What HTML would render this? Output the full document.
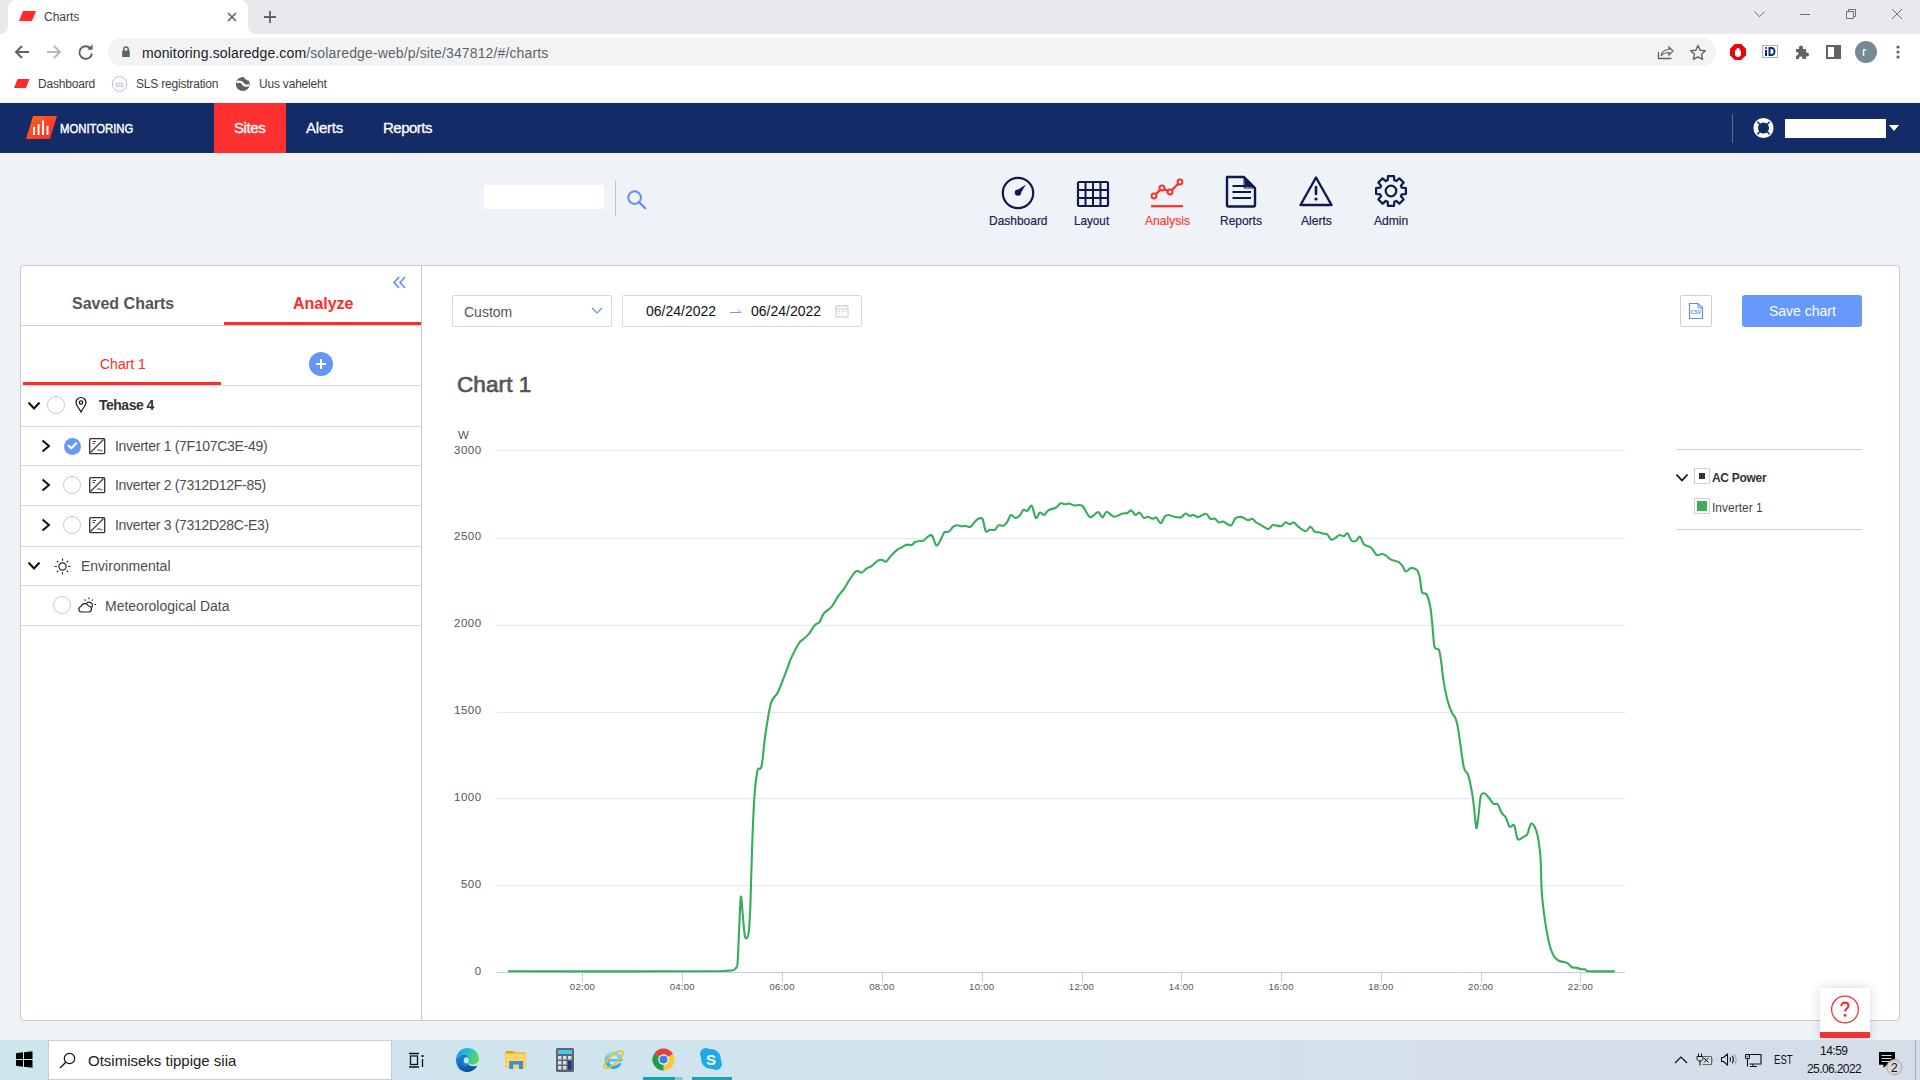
<!DOCTYPE html>
<html><head><meta charset="utf-8">
<style>
*{margin:0;padding:0;box-sizing:border-box}
html,body{width:1920px;height:1080px;overflow:hidden;background:#eff2f7;font-family:"Liberation Sans",sans-serif;position:relative}
.a{position:absolute}
.t{position:absolute;white-space:nowrap;line-height:1}
svg{position:absolute;overflow:visible}
</style></head><body>

<!-- ===== Chrome tab strip ===== -->
<div class="a" style="left:0;top:0;width:1920px;height:34px;background:#e8e9ec"></div>
<div class="a" style="left:0;top:24px;width:260px;height:10px;background:#fff"></div>
<div class="a" style="left:0;top:0;width:8px;height:34px;background:#e8e9ec;border-bottom-right-radius:8px"></div>
<div class="a" style="left:248px;top:0;width:1672px;height:34px;background:#e8e9ec;border-bottom-left-radius:8px"></div>
<div class="a" style="left:8px;top:0;width:240px;height:34px;background:#fff;border-radius:8px 8px 0 0"></div>
<!-- tab favicon -->
<svg style="left:19px;top:11px" width="18" height="12"><path d="M4 0H17L13 10H0Z" fill="#ff2a2a"/></svg>
<div class="t" style="left:44px;top:11px;font-size:12px;color:#3c4043">Charts</div>
<svg style="left:226px;top:11px" width="12" height="12"><path d="M2 2L10 10M10 2L2 10" stroke="#5f6368" stroke-width="1.6"/></svg>
<svg style="left:263px;top:10px" width="14" height="14"><path d="M7 1V13M1 7H13" stroke="#5f6368" stroke-width="1.8"/></svg>
<!-- window controls -->
<svg style="left:1754px;top:11px" width="11" height="7"><path d="M0.5 0.5L5.5 5.8L10.5 0.5" stroke="#707070" fill="none" stroke-width="1"/></svg>
<svg style="left:1800px;top:14px" width="10" height="1"><path d="M0 0.5H10" stroke="#707070" stroke-width="1"/></svg>
<svg style="left:1846px;top:9px" width="11" height="11"><path d="M0.5 2.5H7.5V9.5H0.5Z M2.5 2.5V0.5H9.5V7.5H7.5" stroke="#707070" fill="none" stroke-width="1"/></svg>
<svg style="left:1892px;top:9px" width="10" height="10"><path d="M0 0L10 10M10 0L0 10" stroke="#707070" stroke-width="1"/></svg>

<!-- ===== Address bar row ===== -->
<div class="a" style="left:0;top:34px;width:1920px;height:68px;background:#fff"></div>
<svg style="left:13px;top:43px" width="18" height="18"><path d="M16 9H3M9 3L3 9L9 15" stroke="#5f6368" fill="none" stroke-width="2"/></svg>
<svg style="left:45px;top:43px" width="18" height="18"><path d="M2 9H15M9 3L15 9L9 15" stroke="#b6b8bb" fill="none" stroke-width="2"/></svg>
<svg style="left:77px;top:43px" width="18" height="18"><path d="M15 10.5A6.3 6.3 0 1 1 13.2 5" stroke="#5f6368" fill="none" stroke-width="1.9"/><path d="M10.2 6.7H15.6V1.3Z" fill="#5f6368"/></svg>
<div class="a" style="left:108px;top:38px;width:1608px;height:28px;background:#f1f3f4;border-radius:14px"></div>
<svg style="left:120px;top:45px" width="12" height="14"><path d="M3.8 6V4.3A2.2 2.2 0 0 1 8.2 4.3V6" stroke="#5f6368" fill="none" stroke-width="1.5"/><rect x="2.2" y="5.5" width="7.6" height="6.5" rx="0.6" fill="#5f6368"/></svg>
<div class="t" style="left:142px;top:46px;font-size:14px;letter-spacing:0.13px;color:#202124">monitoring.solaredge.com<span style="color:#5f6368">/solaredge-web/p/site/347812/#/charts</span></div>
<!-- share / star -->
<svg style="left:1657px;top:44px" width="18" height="16"><path d="M1.5 8V14.5H14.5" stroke="#5f6368" fill="none" stroke-width="1.3"/><path d="M4 12C5 7 8 5.5 12 5.5V3L16 7L12 11V8.5C8.5 8.5 6 9.5 4 12Z" stroke="#5f6368" fill="none" stroke-width="1.2"/></svg>
<svg style="left:1689px;top:44px" width="18" height="17"><path d="M9 1.5L11.2 6.3L16.4 6.8L12.5 10.3L13.6 15.4L9 12.8L4.4 15.4L5.5 10.3L1.6 6.8L6.8 6.3Z" stroke="#5f6368" fill="none" stroke-width="1.4" stroke-linejoin="round"/></svg>
<!-- extensions -->
<svg style="left:1730px;top:44px" width="16" height="16"><path d="M4.7 0H11.3L16 4.7V11.3L11.3 16H4.7L0 11.3V4.7Z" fill="#e5090f"/><path d="M5 11V6.5A0.8 0.8 0 0 1 6.5 6.5V4.5A0.8 0.8 0 0 1 8 4.5A0.8 0.8 0 0 1 9.5 5V7A0.8 0.8 0 0 1 11 7.5V10C11 12 9.5 13 8 13C6.5 13 5.5 12 5 11Z" fill="#fff"/></svg>
<svg style="left:1762px;top:45px" width="16" height="13"><rect x="0.5" y="0.5" width="15" height="12" fill="#fff" stroke="#9fb3d9" stroke-width="1"/><rect x="3" y="5" width="2" height="6" fill="#0c2d83"/><rect x="3" y="2" width="2" height="2" fill="#e5202a"/><path d="M6.5 2H9.5C12 2 13.5 3.8 13.5 6.5C13.5 9.2 12 11 9.5 11H6.5Z M8.5 4V9H9.5C10.8 9 11.5 8 11.5 6.5C11.5 5 10.8 4 9.5 4Z" fill="#0c2d83" fill-rule="evenodd"/></svg>
<svg style="left:1794px;top:44px" width="16" height="16"><path d="M2 5H5V3.5A2 2 0 0 1 9 3.5V5H12V8.5H13A2 2 0 0 1 13 12.5H12V15H8.5V14A1.8 1.8 0 0 0 5 14V15H2V11.5H3A1.8 1.8 0 0 0 3 8H2Z" fill="#5f6368"/></svg>
<svg style="left:1826px;top:45px" width="15" height="14"><rect x="1" y="1" width="13" height="12" stroke="#5f6368" fill="none" stroke-width="2"/><rect x="8" y="1" width="6" height="12" fill="#5f6368"/></svg>
<div class="a" style="left:1855px;top:41px;width:22px;height:22px;border-radius:50%;background:#748a97"></div>
<div class="t" style="left:1862px;top:45px;font-size:13px;color:#fff">r</div>
<svg style="left:1896px;top:45px" width="4" height="14"><circle cx="2" cy="2" r="1.6" fill="#5f6368"/><circle cx="2" cy="7" r="1.6" fill="#5f6368"/><circle cx="2" cy="12" r="1.6" fill="#5f6368"/></svg>

<!-- bookmarks -->
<svg style="left:14px;top:79px" width="16" height="10"><path d="M3.5 0H15.5L12 9H0Z" fill="#ff2a2a"/></svg>
<div class="t" style="left:38px;top:78px;font-size:12px;letter-spacing:-0.2px;color:#3c4043">Dashboard</div>
<svg style="left:111px;top:76px" width="17" height="16"><circle cx="8.5" cy="8" r="7.3" fill="#fff" stroke="#c9b3ec" stroke-width="1"/><text x="8.5" y="10.5" font-size="7" text-anchor="middle" fill="#b9a0e8" font-family="Liberation Sans">sls</text></svg>
<div class="t" style="left:136px;top:78px;font-size:12px;letter-spacing:-0.2px;color:#3c4043">SLS registration</div>
<svg style="left:235px;top:76px" width="16" height="16"><circle cx="7.8" cy="8" r="7" fill="#5f6368"/><path d="M1.5 6.2C4 5.2 6.8 5.8 7.8 7.6C8.8 9.4 11 10.2 14.2 9" stroke="#fff" stroke-width="2.3" fill="none"/><path d="M9.5 1.3C10.5 2.8 12.5 3.2 13.8 4.2" stroke="#fff" stroke-width="1.6" fill="none"/></svg>
<div class="t" style="left:259px;top:78px;font-size:12px;letter-spacing:-0.2px;color:#3c4043">Uus vaheleht</div>

<!-- ===== SolarEdge nav ===== -->
<div class="a" style="left:0;top:103px;width:1920px;height:50px;background:#132b66"></div>
<svg style="left:26px;top:116px" width="32" height="23"><defs><linearGradient id="lg" x1="0" y1="0" x2="1" y2="1"><stop offset="0" stop-color="#ff6a1a"/><stop offset="1" stop-color="#ff2430"/></linearGradient></defs><path d="M7 0H31L24 23H0Z" fill="url(#lg)"/><rect x="7" y="11" width="2" height="8" fill="#fff"/><rect x="11.5" y="8" width="2" height="11" fill="#fff"/><rect x="16" y="4.5" width="2" height="14.5" fill="#fff"/><rect x="20.5" y="10" width="2" height="9" fill="#fff"/></svg>
<div class="t" style="left:60px;top:122px;font-size:13px;color:#fff;-webkit-text-stroke:0.45px #fff;transform:scaleX(0.87);transform-origin:0 0">MONITORING</div>
<div class="a" style="left:214px;top:103px;width:72px;height:50px;background:#ff3030"></div>
<div class="t" style="left:234px;top:120px;font-size:15px;letter-spacing:-0.4px;color:#fff;-webkit-text-stroke:0.3px #fff">Sites</div>
<div class="t" style="left:306px;top:120px;font-size:15px;letter-spacing:-0.2px;color:#fff;-webkit-text-stroke:0.3px #fff">Alerts</div>
<div class="t" style="left:383px;top:120px;font-size:15px;letter-spacing:-0.5px;color:#fff;-webkit-text-stroke:0.3px #fff">Reports</div>
<div class="a" style="left:1732px;top:114px;width:1px;height:29px;background:#5a6a96"></div>
<svg style="left:1752px;top:117px" width="22" height="22"><circle cx="11.5" cy="11" r="7.8" stroke="#fff" stroke-width="4.6" fill="none"/><path d="M7.9 7.4L5.3 4.8M15.1 7.4L17.7 4.8M7.9 14.6L5.3 17.2M15.1 14.6L17.7 17.2" stroke="#132b66" stroke-width="1.5"/></svg>
<div class="a" style="left:1785px;top:119px;width:101px;height:19px;background:#fff"></div>
<svg style="left:1889px;top:125px" width="10" height="6"><path d="M0 0H10L5 6Z" fill="#fff"/></svg>

<!-- ===== Sub header ===== -->
<div class="a" style="left:484px;top:185px;width:120px;height:24px;background:#fff"></div>
<div class="a" style="left:615px;top:180px;width:1px;height:36px;background:#c5c8cc"></div>
<svg style="left:626px;top:189px" width="22" height="22"><circle cx="8.6" cy="8.6" r="6.3" stroke="#5b8ff0" stroke-width="2" fill="none"/><path d="M13.2 13.2L19.2 19.2" stroke="#5b8ff0" stroke-width="2.2" stroke-linecap="round"/></svg>

<!-- icons -->
<svg style="left:1000px;top:175px" width="36" height="36"><circle cx="18" cy="18" r="15.2" stroke="#0e1a4f" stroke-width="2.2" fill="none"/><circle cx="18" cy="17.6" r="3.2" fill="#0e1a4f"/><path d="M16 16L26 9.5L19.8 19.5Z" fill="#0e1a4f"/></svg>
<svg style="left:1075px;top:179px" width="36" height="30"><rect x="3" y="3" width="30" height="24" rx="1" stroke="#0e1a4f" stroke-width="2.2" fill="none"/><path d="M10.5 3V27M18 3V27M25.5 3V27M3 11H33M3 19H33" stroke="#0e1a4f" stroke-width="2"/></svg>
<svg style="left:1148px;top:176px" width="38" height="34"><path d="M6 20L14 12L22 16L32 6" stroke="#ff2a2a" stroke-width="2.2" fill="none"/><circle cx="6" cy="20" r="2.4" fill="#fff" stroke="#ff2a2a" stroke-width="2"/><circle cx="14" cy="12" r="2.4" fill="#fff" stroke="#ff2a2a" stroke-width="2"/><circle cx="22" cy="16" r="2.4" fill="#fff" stroke="#ff2a2a" stroke-width="2"/><circle cx="32" cy="6" r="2.4" fill="#fff" stroke="#ff2a2a" stroke-width="2"/><path d="M3 30.2H35" stroke="#ff2a2a" stroke-width="2.2"/></svg>
<svg style="left:1222px;top:172px" width="36" height="38"><path d="M5 5H22L33 16V33A1.5 1.5 0 0 1 31.5 34.5H6.5A1.5 1.5 0 0 1 5 33Z" stroke="#0e1a4f" stroke-width="2.4" fill="none" stroke-linejoin="round"/><path d="M22 5V16H33" stroke="#0e1a4f" stroke-width="1" fill="none"/><path d="M22 5L23 14.5L33 16Z" fill="#0e1a4f"/><path d="M10.5 14H25M10.5 20H29M10.5 26H29" stroke="#0e1a4f" stroke-width="2.2"/></svg>
<svg style="left:1298px;top:175px" width="36" height="34"><path d="M18 2.5L33.5 30H2.5Z" stroke="#0e1a4f" stroke-width="2.4" fill="none" stroke-linejoin="round"/><path d="M18 12V19" stroke="#0e1a4f" stroke-width="2.6" stroke-linecap="round"/><circle cx="18" cy="24" r="1.6" fill="#0e1a4f"/></svg>
<svg style="left:1373px;top:173px" width="36" height="36"><path id="gear" d="M14.69 7.30L14.98 3.10L21.02 3.10L21.31 7.30L23.23 8.09L26.40 5.33L30.67 9.60L27.91 12.77L28.70 14.69L32.90 14.98L32.90 21.02L28.70 21.31L27.91 23.23L30.67 26.40L26.40 30.67L23.23 27.91L21.31 28.70L21.02 32.90L14.98 32.90L14.69 28.70L12.77 27.91L9.60 30.67L5.33 26.40L8.09 23.23L7.30 21.31L3.10 21.02L3.10 14.98L7.30 14.69L8.09 12.77L5.33 9.60L9.60 5.33L12.77 8.09Z" stroke="#0e1a4f" stroke-width="2.2" fill="none" stroke-linejoin="round"/><circle cx="18" cy="18" r="5.3" stroke="#0e1a4f" stroke-width="2.2" fill="none"/></svg>
<div class="t" style="left:989px;top:214px;font-size:13px;color:#1b2350;-webkit-text-stroke:0.2px #1b2350;transform:scaleX(0.92);transform-origin:0 0">Dashboard</div>
<div class="t" style="left:1074px;top:214px;font-size:13px;color:#1b2350;-webkit-text-stroke:0.2px #1b2350;transform:scaleX(0.9);transform-origin:0 0">Layout</div>
<div class="t" style="left:1145px;top:214px;font-size:13px;color:#ff3a3a;-webkit-text-stroke:0.2px #ff3a3a;transform:scaleX(0.93);transform-origin:0 0">Analysis</div>
<div class="t" style="left:1220px;top:214px;font-size:13px;color:#1b2350;-webkit-text-stroke:0.2px #1b2350;transform:scaleX(0.92);transform-origin:0 0">Reports</div>
<div class="t" style="left:1301px;top:214px;font-size:13px;color:#1b2350;-webkit-text-stroke:0.2px #1b2350;transform:scaleX(0.93);transform-origin:0 0">Alerts</div>
<div class="t" style="left:1374px;top:214px;font-size:13px;color:#1b2350;-webkit-text-stroke:0.2px #1b2350;transform:scaleX(0.93);transform-origin:0 0">Admin</div>

<!-- ===== Panels ===== -->
<div class="a" style="left:20px;top:265px;width:1880px;height:756px;background:#fff;border:1px solid #cbcbcb;border-radius:4px"></div>
<div class="a" style="left:421px;top:266px;width:1px;height:754px;background:#cbcbcb"></div>

<!-- LEFT PANEL -->
<div class="t" style="left:72px;top:296px;font-size:16px;font-weight:bold;color:#555">Saved Charts</div>
<div class="t" style="left:293px;top:296px;font-size:16px;font-weight:bold;color:#ff2a2a">Analyze</div>
<svg style="left:392px;top:276px" width="16" height="14"><path d="M7 1L2 6.5L7 12M13 1L8 6.5L13 12" stroke="#5b8ff0" stroke-width="1.6" fill="none"/></svg>
<div class="a" style="left:21px;top:325px;width:400px;height:1px;background:#cfd2d6"></div>
<div class="a" style="left:224px;top:322px;width:197px;height:3px;background:#ff2a2a"></div>

<div class="t" style="left:100px;top:357px;font-size:14px;color:#ff2a2a">Chart 1</div>
<div class="a" style="left:23px;top:382px;width:198px;height:3px;background:#ff2a2a"></div>
<div class="a" style="left:309px;top:352px;width:24px;height:24px;border-radius:50%;background:#6496f6"></div>
<svg style="left:315px;top:358px" width="12" height="12"><path d="M6 1V11M1 6H11" stroke="#fff" stroke-width="2"/></svg>
<div class="a" style="left:21px;top:385px;width:400px;height:1px;background:#d5d7da"></div>

<!-- Tehase 4 row -->
<svg style="left:27px;top:401px" width="14" height="10"><path d="M1.5 1.5L7 7.5L12.5 1.5" stroke="#111" stroke-width="2" fill="none"/></svg>
<div class="a" style="left:47px;top:396px;width:18px;height:18px;border-radius:50%;border:1px solid #c9c9c9"></div>
<svg style="left:75px;top:397px" width="12" height="16"><path d="M6 15C4 11 1 8.5 1 5.5A5 5 0 0 1 11 5.5C11 8.5 8 11 6 15Z" stroke="#111" stroke-width="1.2" fill="none"/><circle cx="6" cy="5.5" r="1.7" stroke="#111" stroke-width="1.2" fill="none"/></svg>
<div class="t" style="left:99px;top:398px;font-size:14px;font-weight:bold;letter-spacing:-0.5px;color:#333">Tehase 4</div>
<div class="a" style="left:21px;top:426px;width:400px;height:1px;background:#d5d7da"></div>

<!-- inverter rows -->
<svg style="left:40px;top:439px" width="12" height="14"><path d="M2.5 1.5L9 7L2.5 12.5" stroke="#111" stroke-width="2" fill="none"/></svg>
<div class="a" style="left:63.5px;top:437.5px;width:17px;height:17px;border-radius:50%;background:#6699f8"></div>
<svg style="left:66px;top:440px" width="13" height="11"><path d="M2 5.3L5.2 8.3L10.8 2.8" stroke="#fff" stroke-width="2.2" fill="none"/></svg>
<svg style="left:89px;top:438px" width="17" height="17"><rect x="0.7" y="0.7" width="15" height="15" rx="1" stroke="#333" stroke-width="1.3" fill="none"/><path d="M1.5 14.5L14.5 1.5" stroke="#333" stroke-width="1.1"/><path d="M3.5 3.5H7M3.5 5.5H6" stroke="#333" stroke-width="0.9"/><path d="M8.8 13C9.2 11.2 10.5 11 11 12.3C11.5 13.5 12.8 13.3 13.2 11.8" stroke="#333" stroke-width="1" fill="none"/></svg>
<div class="t" style="left:115px;top:439px;font-size:14px;letter-spacing:-0.3px;color:#4d4d4d">Inverter 1 (7F107C3E-49)</div>
<div class="a" style="left:21px;top:465px;width:400px;height:1px;background:#d5d7da"></div>

<svg style="left:40px;top:478px" width="12" height="14"><path d="M2.5 1.5L9 7L2.5 12.5" stroke="#111" stroke-width="2" fill="none"/></svg>
<div class="a" style="left:63px;top:476px;width:18px;height:18px;border-radius:50%;border:1px solid #c9c9c9"></div>
<svg style="left:89px;top:477px" width="17" height="17"><rect x="0.7" y="0.7" width="15" height="15" rx="1" stroke="#333" stroke-width="1.3" fill="none"/><path d="M1.5 14.5L14.5 1.5" stroke="#333" stroke-width="1.1"/><path d="M3.5 3.5H7M3.5 5.5H6" stroke="#333" stroke-width="0.9"/><path d="M8.8 13C9.2 11.2 10.5 11 11 12.3C11.5 13.5 12.8 13.3 13.2 11.8" stroke="#333" stroke-width="1" fill="none"/></svg>
<div class="t" style="left:115px;top:478px;font-size:14px;letter-spacing:-0.3px;color:#4d4d4d">Inverter 2 (7312D12F-85)</div>
<div class="a" style="left:21px;top:505px;width:400px;height:1px;background:#d5d7da"></div>

<svg style="left:40px;top:518px" width="12" height="14"><path d="M2.5 1.5L9 7L2.5 12.5" stroke="#111" stroke-width="2" fill="none"/></svg>
<div class="a" style="left:63px;top:516px;width:18px;height:18px;border-radius:50%;border:1px solid #c9c9c9"></div>
<svg style="left:89px;top:517px" width="17" height="17"><rect x="0.7" y="0.7" width="15" height="15" rx="1" stroke="#333" stroke-width="1.3" fill="none"/><path d="M1.5 14.5L14.5 1.5" stroke="#333" stroke-width="1.1"/><path d="M3.5 3.5H7M3.5 5.5H6" stroke="#333" stroke-width="0.9"/><path d="M8.8 13C9.2 11.2 10.5 11 11 12.3C11.5 13.5 12.8 13.3 13.2 11.8" stroke="#333" stroke-width="1" fill="none"/></svg>
<div class="t" style="left:115px;top:518px;font-size:14px;letter-spacing:-0.3px;color:#4d4d4d">Inverter 3 (7312D28C-E3)</div>
<div class="a" style="left:21px;top:546px;width:400px;height:1px;background:#d5d7da"></div>

<!-- environmental -->
<svg style="left:27px;top:561px" width="14" height="10"><path d="M1.5 1.5L7 7.5L12.5 1.5" stroke="#111" stroke-width="2" fill="none"/></svg>
<svg style="left:54px;top:558px" width="17" height="17"><circle cx="8.5" cy="8.5" r="3.6" stroke="#222" stroke-width="1.2" fill="none"/><path d="M8.5 0.5V2.8M8.5 14.2V16.5M0.5 8.5H2.8M14.2 8.5H16.5M2.8 2.8L4.4 4.4M12.6 12.6L14.2 14.2M2.8 14.2L4.4 12.6M12.6 4.4L14.2 2.8" stroke="#222" stroke-width="1.1"/></svg>
<div class="t" style="left:81px;top:559px;font-size:14px;color:#4d4d4d">Environmental</div>
<div class="a" style="left:21px;top:585px;width:400px;height:1px;background:#d5d7da"></div>

<div class="a" style="left:53px;top:596px;width:18px;height:18px;border-radius:50%;border:1px solid #c9c9c9"></div>
<svg style="left:78px;top:597px" width="18" height="16"><path d="M3.5 15H10.5A3 3 0 0 0 10.5 9A4 4 0 0 0 3 9.5A2.8 2.8 0 0 0 3.5 15Z" stroke="#222" stroke-width="1.2" fill="none"/><path d="M8.3 6.5A3.5 3.5 0 0 1 14.5 8.5A3 3 0 0 1 13 11" stroke="#222" stroke-width="1.1" fill="none"/><path d="M11 0.5V2.3M16.5 7.5H18M14.8 2.5L13.8 3.6M6.5 2.5L7.6 3.6" stroke="#222" stroke-width="1.1"/></svg>
<div class="t" style="left:105px;top:599px;font-size:14px;color:#4d4d4d">Meteorological Data</div>
<div class="a" style="left:21px;top:625px;width:400px;height:1px;background:#d5d7da"></div>

<!-- RIGHT PANEL header -->
<div class="a" style="left:452px;top:295px;width:160px;height:32px;border:1px solid #d9d9d9;border-radius:2px"></div>
<div class="t" style="left:464px;top:305px;font-size:14px;color:#555">Custom</div>
<svg style="left:591px;top:307px" width="12" height="8"><path d="M1 1L6 6L11 1" stroke="#6e8cf0" stroke-width="1.2" fill="none"/></svg>
<div class="a" style="left:622px;top:295px;width:240px;height:32px;border:1px solid #d9d9d9;border-radius:2px"></div>
<div class="t" style="left:646px;top:304px;font-size:14px;color:#111">06/24/2022</div>
<svg style="left:730px;top:308px" width="12" height="6"><path d="M0 4.5H11L8 1.5" stroke="#999" stroke-width="1" fill="none"/></svg>
<div class="t" style="left:751px;top:304px;font-size:14px;color:#111">06/24/2022</div>
<svg style="left:835px;top:304px" width="14" height="14"><rect x="1" y="2" width="12" height="11" stroke="#c8c8c8" stroke-width="1" fill="none"/><path d="M1 5H13M4 1V3M10 1V3M3.5 7.5H5M6.5 7.5H8M9.5 7.5H11M3.5 10H5M6.5 10H8" stroke="#c8c8c8" stroke-width="1"/></svg>

<div class="a" style="left:1680px;top:295px;width:32px;height:32px;border:1px solid #d0d0d0;border-radius:2px"></div>
<svg style="left:1688px;top:302px" width="16" height="18"><path d="M1.5 1.5H10L14.5 6V16.5H1.5Z" stroke="#5b8ff0" stroke-width="1.2" fill="none"/><path d="M10 1.5V6H14.5" stroke="#5b8ff0" stroke-width="1" fill="none"/><text x="8" y="12" font-size="5" font-weight="bold" text-anchor="middle" fill="#5b8ff0" font-family="Liberation Sans">CSV</text></svg>
<div class="a" style="left:1742px;top:295px;width:120px;height:32px;background:#6699fb;border-radius:3px"></div>
<div class="t" style="left:1769px;top:304px;font-size:14px;color:#fff">Save chart</div>

<div class="t" style="left:457px;top:374px;font-size:22.5px;letter-spacing:0.1px;color:#555;-webkit-text-stroke:0.7px #555">Chart 1</div>

<!-- CHART -->
<svg id="chart" style="left:0;top:0" width="1920" height="1080"><g><path d="M497 885.5H1625" stroke="#e1eaf5" stroke-width="1"/><path d="M497 798.5H1625" stroke="#e1eaf5" stroke-width="1"/><path d="M497 712.5H1625" stroke="#e1eaf5" stroke-width="1"/><path d="M497 625.5H1625" stroke="#e1eaf5" stroke-width="1"/><path d="M497 538.5H1625" stroke="#e1eaf5" stroke-width="1"/><path d="M497 450.5H1625" stroke="#e1eaf5" stroke-width="1"/><path d="M497 972.5H1625" stroke="#c0cfe2" stroke-width="1"/><path d="M582.5 972V982" stroke="#c0cfe2" stroke-width="1"/><path d="M682.5 972V982" stroke="#c0cfe2" stroke-width="1"/><path d="M782.5 972V982" stroke="#c0cfe2" stroke-width="1"/><path d="M882.5 972V982" stroke="#c0cfe2" stroke-width="1"/><path d="M982.5 972V982" stroke="#c0cfe2" stroke-width="1"/><path d="M1082.5 972V982" stroke="#c0cfe2" stroke-width="1"/><path d="M1181.5 972V982" stroke="#c0cfe2" stroke-width="1"/><path d="M1281.5 972V982" stroke="#c0cfe2" stroke-width="1"/><path d="M1381.5 972V982" stroke="#c0cfe2" stroke-width="1"/><path d="M1481.5 972V982" stroke="#c0cfe2" stroke-width="1"/><path d="M1580.5 972V982" stroke="#c0cfe2" stroke-width="1"/></g><g font-family="Liberation Sans" font-size="11.5" letter-spacing="0.45" fill="#555"><text x="481.5" y="887.7" text-anchor="end">500</text><text x="481.5" y="800.8" text-anchor="end">1000</text><text x="481.5" y="714.0" text-anchor="end">1500</text><text x="481.5" y="627.2" text-anchor="end">2000</text><text x="481.5" y="540.4" text-anchor="end">2500</text><text x="481.5" y="453.5" text-anchor="end">3000</text><text x="481.5" y="974.5" text-anchor="end">0</text><text x="458" y="439">W</text></g><g font-family="Liberation Sans" font-size="9.6" letter-spacing="0.25" fill="#555"><text x="582.5" y="990.2" text-anchor="middle">02:00</text><text x="682.3" y="990.2" text-anchor="middle">04:00</text><text x="782.1" y="990.2" text-anchor="middle">06:00</text><text x="881.9" y="990.2" text-anchor="middle">08:00</text><text x="981.7" y="990.2" text-anchor="middle">10:00</text><text x="1081.5" y="990.2" text-anchor="middle">12:00</text><text x="1181.3" y="990.2" text-anchor="middle">14:00</text><text x="1281.1" y="990.2" text-anchor="middle">16:00</text><text x="1380.9" y="990.2" text-anchor="middle">18:00</text><text x="1480.7" y="990.2" text-anchor="middle">20:00</text><text x="1580.5" y="990.2" text-anchor="middle">22:00</text></g><path d="M508.0 971.3 C543.8 971.2 684.8 971.6 722.9 971.0 C736.4 970.4 733.9 970.2 736.4 967.5 C738.0 964.8 737.3 966.8 738.0 955.0 C738.7 943.2 740.0 903.4 740.8 896.6 C741.6 895.1 742.0 907.2 742.7 914.0 C743.4 920.8 744.2 934.1 745.2 937.5 C746.2 939.0 747.5 939.0 748.4 934.4 C749.2 929.4 749.7 922.5 750.3 907.6 C750.9 892.7 751.5 863.1 752.2 844.7 C752.9 826.3 753.5 809.7 754.4 797.4 C755.3 785.1 756.3 775.9 757.5 770.7 C758.7 765.5 760.3 772.0 761.6 766.0 C762.9 760.0 763.8 745.0 765.4 734.5 C767.0 724.0 768.9 710.1 771.0 703.0 C773.1 695.9 775.3 697.8 778.0 692.0 C780.7 686.2 785.3 673.7 787.4 668.3 C789.5 662.9 788.7 663.6 790.6 659.4 C792.5 655.2 796.8 646.7 798.9 643.3 C801.0 639.9 801.6 640.8 803.3 639.2 C805.0 637.6 806.9 636.3 808.9 633.9 C810.9 631.5 813.2 627.0 815.0 625.0 C816.8 623.0 817.9 624.2 819.4 622.2 C820.9 620.2 821.8 615.9 823.9 613.3 C826.0 610.7 829.4 609.5 831.7 606.7 C834.0 603.9 835.7 599.8 837.8 596.7 C839.9 593.6 842.5 591.1 844.4 588.3 C846.3 585.5 847.4 582.9 849.4 580.0 C851.4 577.1 854.0 572.3 856.1 571.1 C858.2 569.9 860.0 573.0 861.7 572.6 C863.4 572.2 864.4 570.1 866.1 568.9 C867.9 567.7 870.2 567.0 872.2 565.6 C874.2 564.2 876.1 561.5 877.8 560.6 C879.5 559.7 880.8 559.8 882.2 560.0 C883.6 560.2 884.6 562.4 886.1 561.7 C887.6 561.0 889.2 557.7 891.1 555.6 C893.0 553.5 895.9 550.8 897.8 549.4 C899.6 548.0 900.7 548.0 902.2 547.2 C903.7 546.4 905.1 545.1 906.7 544.7 C908.3 544.3 910.3 545.5 911.7 545.0 C913.1 544.5 913.6 542.7 915.0 542.0 C916.4 541.3 918.5 541.3 920.0 541.0 C921.5 540.7 922.4 541.1 923.8 540.4 C925.1 539.7 926.5 537.5 927.9 536.7 C929.3 535.9 930.7 534.2 932.1 535.7 C933.5 537.2 934.9 544.6 936.2 545.4 C937.6 546.2 939.1 542.5 940.4 540.4 C941.7 538.2 942.8 534.0 944.2 532.5 C945.6 531.0 947.2 532.7 948.8 531.7 C950.3 530.7 951.9 527.8 953.3 526.7 C954.7 525.6 955.9 525.3 957.1 525.2 C958.4 525.1 959.3 526.1 960.8 526.2 C962.2 526.4 964.3 525.9 965.8 526.0 C967.3 526.1 968.8 527.5 970.0 527.1 C971.2 526.7 972.0 525.1 973.3 523.8 C974.5 522.4 976.0 520.0 977.5 519.2 C979.0 518.4 981.1 517.2 982.5 518.8 C983.9 520.8 984.5 529.4 985.8 531.2 C987.0 532.8 988.5 530.0 990.0 529.8 C991.5 529.6 993.6 530.5 995.0 529.8 C996.4 529.1 996.9 526.1 998.3 525.4 C999.7 524.7 1001.8 526.2 1003.3 525.7 C1004.8 525.2 1005.9 523.9 1007.1 522.1 C1008.4 520.3 1009.4 515.7 1010.8 515.0 C1012.2 514.3 1013.9 517.8 1015.4 517.9 C1016.9 518.0 1018.3 517.1 1019.6 515.8 C1020.9 514.5 1022.0 510.8 1023.3 510.0 C1024.6 509.2 1026.1 511.5 1027.5 510.8 C1028.9 510.1 1030.3 504.6 1031.7 505.8 C1033.1 507.0 1034.4 516.8 1035.8 517.9 C1037.2 519.0 1038.6 513.0 1040.0 512.5 C1041.4 512.0 1042.8 515.4 1044.2 515.0 C1045.6 514.6 1046.3 511.6 1048.3 510.4 C1050.3 509.1 1054.2 508.7 1056.2 507.5 C1058.3 506.3 1059.3 503.8 1060.8 503.3 C1062.3 502.8 1063.6 504.3 1065.0 504.3 C1066.4 504.3 1067.7 503.3 1069.2 503.5 C1070.7 503.7 1072.1 505.0 1074.2 505.4 C1076.3 505.8 1079.5 503.9 1082.1 505.7 C1084.7 507.6 1087.4 516.0 1090.0 517.1 C1092.6 518.2 1095.8 512.1 1097.9 512.1 C1100.0 512.1 1101.0 517.3 1102.5 517.3 C1104.0 517.2 1104.8 511.9 1106.7 511.8 C1108.7 511.7 1111.7 516.5 1114.2 516.8 C1116.7 517.1 1119.5 514.4 1121.7 513.8 C1123.9 513.1 1125.9 513.5 1127.5 512.9 C1129.1 512.3 1129.9 510.0 1131.2 510.4 C1132.6 510.8 1134.0 514.6 1135.4 515.0 C1136.8 515.4 1138.2 512.2 1139.6 512.7 C1141.0 513.2 1142.4 517.2 1143.8 517.9 C1145.1 518.6 1146.4 516.6 1147.9 516.7 C1149.4 516.8 1151.1 518.6 1152.5 518.8 C1153.9 518.9 1154.9 516.8 1156.2 517.5 C1157.6 518.2 1159.4 523.3 1160.8 523.2 C1162.2 523.1 1163.3 518.1 1164.6 516.7 C1165.9 515.3 1167.3 515.0 1168.8 515.0 C1170.2 515.0 1171.3 516.1 1173.3 516.5 C1175.3 516.9 1178.8 518.0 1180.8 517.5 C1182.8 517.0 1183.9 513.8 1185.4 513.5 C1186.9 513.2 1188.3 515.8 1189.6 516.0 C1190.9 516.2 1191.8 514.8 1193.3 515.0 C1194.8 515.2 1196.2 517.3 1198.3 517.1 C1200.4 516.9 1203.8 513.5 1205.8 513.8 C1207.8 514.0 1208.9 517.9 1210.4 518.8 C1211.9 519.6 1213.6 518.1 1215.0 518.8 C1216.4 519.4 1217.4 522.0 1218.8 522.5 C1220.1 523.0 1221.3 521.0 1223.3 521.5 C1225.3 522.0 1228.8 526.1 1230.8 525.6 C1232.8 525.1 1233.9 519.8 1235.4 518.3 C1236.9 516.8 1238.2 517.0 1239.6 516.9 C1241.0 516.8 1242.4 517.3 1243.8 517.9 C1245.1 518.5 1246.5 520.1 1247.9 520.2 C1249.3 520.4 1250.7 518.4 1252.1 518.8 C1253.5 519.1 1254.9 521.5 1256.2 522.5 C1257.6 523.5 1258.4 523.5 1260.4 524.6 C1262.4 525.7 1266.2 528.9 1268.3 529.0 C1270.4 529.1 1270.7 525.5 1272.9 525.0 C1275.1 524.5 1279.2 526.7 1281.2 526.2 C1283.3 525.8 1284.0 522.6 1285.4 522.3 C1286.8 522.0 1288.2 524.2 1289.6 524.2 C1291.0 524.2 1292.3 522.1 1293.8 522.5 C1295.2 522.9 1296.3 525.2 1298.3 526.7 C1300.3 528.2 1303.8 531.2 1305.8 531.2 C1307.8 531.2 1308.9 526.6 1310.4 526.7 C1311.9 526.8 1313.3 530.8 1314.6 531.7 C1315.9 532.6 1316.8 532.0 1318.3 532.3 C1319.8 532.6 1322.3 533.4 1323.8 533.8 C1325.2 534.1 1325.8 533.2 1327.1 534.2 C1328.3 535.2 1329.9 538.9 1331.2 539.6 C1332.6 540.3 1333.6 539.1 1335.0 538.3 C1336.4 537.5 1338.1 535.3 1339.6 535.0 C1341.1 534.7 1342.4 536.5 1343.8 536.2 C1345.1 536.0 1346.2 532.5 1347.5 533.3 C1348.8 534.1 1350.2 539.6 1351.7 540.8 C1353.2 542.0 1354.9 541.4 1356.2 540.7 C1357.6 540.0 1358.7 536.1 1360.0 536.7 C1361.3 537.4 1362.3 542.8 1364.2 544.6 C1366.1 546.4 1369.2 546.0 1371.2 547.7 C1373.3 549.4 1375.0 554.0 1376.7 555.0 C1378.4 556.0 1380.2 554.0 1381.7 554.0 C1383.2 554.0 1383.9 554.3 1385.4 555.2 C1386.9 556.1 1388.8 558.5 1390.9 559.6 C1393.1 560.7 1396.3 560.8 1398.3 561.9 C1400.3 563.0 1401.6 564.7 1402.8 566.3 C1404.0 567.9 1404.3 571.2 1405.7 571.5 C1407.1 571.8 1409.0 568.4 1410.9 568.1 C1412.8 567.9 1415.4 568.5 1416.9 570.0 C1418.4 571.5 1419.0 573.7 1419.8 577.4 C1420.6 581.1 1420.9 589.4 1422.0 592.2 C1423.1 595.0 1425.1 592.0 1426.5 594.4 C1427.9 596.8 1429.2 601.1 1430.2 606.3 C1431.2 611.5 1431.7 618.8 1432.4 625.6 C1433.1 632.4 1433.5 642.9 1434.6 647.0 C1435.7 651.1 1437.9 647.4 1439.0 650.0 C1440.1 652.6 1440.5 657.5 1441.3 662.6 C1442.0 667.7 1442.5 674.2 1443.5 680.4 C1444.5 686.6 1446.0 694.6 1447.4 700.0 C1448.8 705.4 1450.5 709.5 1451.9 712.6 C1453.3 715.7 1454.5 715.4 1455.6 718.5 C1456.7 721.6 1457.2 723.1 1458.5 731.1 C1459.8 739.1 1462.1 759.4 1463.7 766.7 C1465.3 774.0 1466.7 770.6 1468.1 774.8 C1469.5 779.0 1470.9 786.3 1471.9 791.9 C1472.9 797.5 1473.4 802.1 1474.1 808.1 C1474.8 814.1 1475.6 826.9 1476.3 828.1 C1477.0 829.4 1477.8 820.9 1478.5 815.6 C1479.2 810.3 1479.7 800.0 1480.7 796.3 C1481.7 792.6 1483.0 793.0 1484.4 793.3 C1485.8 793.5 1487.4 796.1 1488.9 797.8 C1490.4 799.5 1491.8 802.6 1493.3 803.7 C1494.8 804.8 1496.4 802.9 1497.8 804.4 C1499.2 805.9 1500.2 810.4 1501.5 812.6 C1502.8 814.8 1504.6 815.4 1505.9 817.8 C1507.2 820.1 1508.2 825.5 1509.6 826.7 C1511.0 827.9 1512.7 823.7 1514.1 825.2 C1515.5 827.3 1516.1 837.4 1517.8 839.3 C1519.5 840.8 1522.8 837.2 1524.4 836.3 C1526.0 835.4 1526.3 836.2 1527.4 834.1 C1528.5 832.0 1529.7 824.6 1531.1 823.7 C1532.5 822.8 1534.4 826.1 1535.6 828.9 C1536.8 831.7 1537.7 835.5 1538.5 840.7 C1539.3 845.9 1540.2 852.6 1540.7 860.0 C1541.2 867.4 1541.1 877.9 1541.4 884.9 C1541.7 891.9 1541.9 895.1 1542.6 901.7 C1543.3 908.3 1544.4 917.2 1545.6 924.6 C1546.8 932.0 1548.5 941.0 1549.9 946.3 C1551.3 951.6 1552.6 954.1 1554.1 956.5 C1555.6 958.9 1556.7 959.6 1558.9 960.7 C1561.1 961.8 1565.1 962.0 1567.3 963.1 C1569.5 964.2 1570.4 966.5 1572.1 967.3 C1573.8 968.1 1576.1 967.6 1577.5 967.9 C1578.9 968.2 1579.2 968.9 1580.5 969.1 C1581.8 969.4 1584.2 969.0 1585.4 969.4 C1586.6 969.8 1585.4 971.0 1587.8 971.3 C1592.7 971.6 1610.3 971.3 1614.8 971.3" stroke="#36ad5a" stroke-width="2.1" fill="none" stroke-linejoin="round"/></svg>

<!-- legend -->
<div class="a" style="left:1676px;top:449px;width:186px;height:1px;background:#cfcfcf"></div>
<svg style="left:1675px;top:473px" width="14" height="10"><path d="M1.5 1.5L7 7.5L12.5 1.5" stroke="#111" stroke-width="1.8" fill="none"/></svg>
<div class="a" style="left:1694px;top:468px;width:16px;height:16px;border:1px solid #d0d0d0;background:#fff"></div>
<div class="a" style="left:1699px;top:473px;width:6px;height:6px;background:#333"></div>
<div class="t" style="left:1712px;top:472px;font-size:12px;font-weight:bold;letter-spacing:-0.3px;color:#333">AC Power</div>
<div class="a" style="left:1694px;top:498px;width:16px;height:16px;border:1px solid #d0d0d0;background:#fff"></div>
<div class="a" style="left:1697px;top:501px;width:10px;height:10px;background:#3daf5c"></div>
<div class="t" style="left:1712px;top:502px;font-size:12px;color:#444">Inverter 1</div>
<div class="a" style="left:1676px;top:529px;width:186px;height:1px;background:#cfcfcf"></div>

<!-- help button -->
<div class="a" style="left:1820px;top:988px;width:50px;height:50px;background:#fff;box-shadow:0 0 10px rgba(0,0,0,0.16)"></div>
<div class="a" style="left:1820px;top:1032px;width:50px;height:6px;background:#ee3338"></div>
<svg style="left:1830px;top:995px" width="30" height="30"><circle cx="15" cy="14.5" r="13.4" stroke="#ee3338" stroke-width="1.3" fill="none"/><path d="M11.4 11.3C11.4 8.8 13 7.6 15 7.6C17 7.6 18.5 8.9 18.5 10.8C18.5 13.3 15 13.8 15 16.6" stroke="#ee3338" stroke-width="2.1" fill="none"/><circle cx="15" cy="20.2" r="1.5" fill="#ee3338"/></svg>

<!-- ===== Taskbar ===== -->
<div class="a" style="left:0;top:1040px;width:1920px;height:40px;background:linear-gradient(90deg,#cfe5ee 0%,#d0e4ee 40%,#d4dfea 75%,#d5dde9 100%)"></div>
<svg style="left:16px;top:1052px" width="17" height="16"><path d="M0 1.2L7 0.3V7H0Z M8 0.2L16.5 -0.8V7H8Z M0 8H7V14.7L0 13.8Z M8 8H16.5V15.8L8 14.8Z" fill="#000"/></svg>
<div class="a" style="left:48px;top:1040px;width:344px;height:40px;background:#fff;border:1px solid #c8cdd2"></div>
<svg style="left:59px;top:1052px" width="18" height="17"><circle cx="10.5" cy="6.5" r="5.2" stroke="#111" stroke-width="1.2" fill="none"/><path d="M6.8 10.2L1 16" stroke="#111" stroke-width="1.3"/></svg>
<div class="t" style="left:88px;top:1053px;font-size:15px;color:#222">Otsimiseks tippige siia</div>

<svg style="left:406px;top:1050px" width="20" height="20"><path d="M3 3.5H13M3 17H13" stroke="#111" stroke-width="1.3"/><rect x="4.5" y="6" width="7" height="8.5" stroke="#111" stroke-width="1.3" fill="none"/><rect x="15.5" y="5" width="2" height="2" fill="#111"/><path d="M16.5 9V17" stroke="#111" stroke-width="1.3"/></svg>
<!-- edge -->
<svg style="left:455px;top:1048px" width="25" height="25"><defs><linearGradient id="eg" x1="0" y1="0.3" x2="1" y2="0.6"><stop offset="0" stop-color="#1b9de8"/><stop offset="0.5" stop-color="#27c0c8"/><stop offset="1" stop-color="#5bdc4e"/></linearGradient><linearGradient id="eg2" x1="0" y1="0" x2="0.6" y2="1"><stop offset="0" stop-color="#1590e0"/><stop offset="1" stop-color="#0b4f9e"/></linearGradient></defs>
<path d="M1 11C1.5 4.5 6.5 0 12.5 0C19 0 24 5 24 10.5C24 14 21.5 16.5 17.5 16.5C14 16.5 12.5 15 13.5 13C15 10 12.5 6.5 9 6.5C5 6.5 1.5 9 1 11Z" fill="url(#eg)"/>
<path d="M1 11C1.5 9 5 6.5 9 6.5C12.5 6.5 14.5 9.5 13.2 12.5C11.8 15.5 14 18.2 18 18.2C20 18.2 21.5 17.8 22.5 17.2C20.5 21.5 16.5 24 12 24C5.5 24 0.8 18.8 1 11Z" fill="url(#eg2)"/>
<path d="M7 17C6.5 13 8 9.5 10.5 9C12 8.8 13.2 10 13.2 12C12.3 14.5 12.5 16 14 17.5C11 18.5 8 18.5 7 17Z" fill="#1a7fd4"/>
<ellipse cx="11.2" cy="12.3" rx="2.3" ry="3.1" fill="#d3e6ef"/></svg>
<!-- folder -->
<svg style="left:505px;top:1050px" width="22" height="20"><path d="M0.5 1H8.5L10 2.5H21V17.8H0.5Z" fill="#e3a21a"/><path d="M0.5 3.5H21V17.8H0.5Z" fill="#ffd561"/><path d="M4.3 11H18V19H14V14.4H8.2V19H4.3Z" fill="#3a8fdc"/></svg>
<!-- calc -->
<svg style="left:556px;top:1048px" width="18" height="24"><rect x="0" y="0" width="18" height="24" rx="1.5" fill="#5d6670"/><rect x="2" y="2" width="14" height="4" fill="#46c7f0"/><g fill="#d8dee4"><rect x="2" y="8" width="3.5" height="3.5"/><rect x="7" y="8" width="3.5" height="3.5"/><rect x="12" y="8" width="3.5" height="3.5"/><rect x="2" y="13" width="3.5" height="3.5"/><rect x="7" y="13" width="3.5" height="3.5"/><rect x="2" y="18" width="3.5" height="3.5"/><rect x="7" y="18" width="3.5" height="3.5"/></g><rect x="12" y="13" width="3.5" height="8.5" fill="#0f3d8a"/></svg>
<!-- IE -->
<svg style="left:601px;top:1047px" width="25" height="25"><defs><linearGradient id="ieg" x1="0" y1="0" x2="0" y2="1"><stop offset="0" stop-color="#9be3fb"/><stop offset="1" stop-color="#1e9fe0"/></linearGradient></defs><circle cx="12.5" cy="13" r="9" fill="url(#ieg)"/><path d="M8.2 12H17C16.8 9.5 15 8.2 12.6 8.2C10.2 8.2 8.4 9.6 8.2 12Z" fill="#d3e6ef"/><path d="M8.4 14.6C8.8 17.2 10.5 18.6 12.8 18.6C14.8 18.6 16.2 17.8 17.2 16.2H22V14.6Z" fill="#d3e6ef"/><ellipse cx="12.5" cy="12.5" rx="12.2" ry="4.2" transform="rotate(-42 12.5 12.5)" stroke="#f3c21c" stroke-width="1.7" fill="none"/></svg>
<!-- chrome -->
<svg style="left:652px;top:1048px" width="23" height="23"><path d="M11.5 11.5L1.97 6.00A11 11 0 0 1 21.03 6.00Z" fill="#db4437"/><path d="M11.5 11.5L21.03 6.00A11 11 0 0 1 11.50 22.50Z" fill="#fcc934"/><path d="M11.5 11.5L11.50 22.50A11 11 0 0 1 1.97 6.00Z" fill="#1e9e4a"/><circle cx="11.5" cy="11.5" r="5.2" fill="#fff"/><circle cx="11.5" cy="11.5" r="4.1" fill="#3d7ee8"/></svg>
<div class="a" style="left:643px;top:1077px;width:32px;height:3px;background:#16a5b3"></div><div class="a" style="left:675px;top:1077px;width:8px;height:3px;background:#7ccdd6"></div>
<!-- skype -->
<svg style="left:699px;top:1047px" width="24" height="24"><circle cx="7" cy="7" r="6" fill="#1eaae8"/><circle cx="17" cy="17" r="6" fill="#1eaae8"/><circle cx="12" cy="12" r="10" fill="#1eaae8"/><text x="12" y="17.5" font-size="15" font-weight="bold" text-anchor="middle" fill="#fff" font-family="Liberation Sans">S</text></svg>
<div class="a" style="left:692px;top:1077px;width:40px;height:3px;background:#1aa6b7"></div>

<!-- tray -->
<svg style="left:1674px;top:1055px" width="14" height="10"><path d="M1 8L7 2L13 8" stroke="#111" stroke-width="1.2" fill="none"/></svg>
<svg style="left:1696px;top:1053px" width="18" height="13"><path d="M2.5 0.5V3M5.5 0.5V3" stroke="#111" stroke-width="1"/><path d="M1 3.5H7V5.5C7 7 6 8 4 8C2 8 1 7 1 5.5Z" stroke="#111" stroke-width="1" fill="none"/><path d="M4 8V12.5" stroke="#111" stroke-width="1.1"/><path d="M6.5 3.5H15.5V11.5H6.5" stroke="#666" stroke-width="1" fill="none"/><path d="M16 5.5V9.5" stroke="#666" stroke-width="1"/><path d="M8 5L12.5 9.5M12.5 5L8 9.5" stroke="#111" stroke-width="1"/></svg>
<svg style="left:1720px;top:1053px" width="18" height="14"><path d="M1.5 4.5H3.5L7.5 0.8V12.2L3.5 8.5H1.5Z" stroke="#111" stroke-width="1.1" fill="none" stroke-linejoin="round"/><path d="M10 4.3Q11.2 6.5 10 8.7M12.2 2.8Q14.5 6.5 12.2 10.2" stroke="#111" stroke-width="1.1" fill="none"/><path d="M14.5 1.2Q17.8 6.5 14.5 11.8" stroke="#999" stroke-width="1" fill="none"/></svg>
<svg style="left:1745px;top:1053px" width="18" height="15"><path d="M4.5 1.5H16V11H4.5" stroke="#111" stroke-width="1.1" fill="none"/><path d="M0.5 1.5H4.5V5.5H0.5Z" stroke="#111" stroke-width="1" fill="none"/><path d="M2.5 5.5V13.5M8 11V13.5M5 13.5H12" stroke="#111" stroke-width="1.1"/><path d="M1.5 3L2.5 4L3.8 2.4" stroke="#111" stroke-width="0.7" fill="none"/></svg>
<div class="t" style="left:1774px;top:1054px;font-size:12px;color:#111;transform:scaleX(0.8);transform-origin:0 0">EST</div>
<div class="t" style="left:1820px;top:1045px;font-size:12px;letter-spacing:-0.5px;color:#111">14:59</div>
<div class="t" style="left:1807px;top:1063px;font-size:12px;letter-spacing:-0.6px;color:#111">25.06.2022</div>
<svg style="left:1878px;top:1051px" width="26" height="26"><path d="M1 1H17V13.7H9L5.5 17V13.7H1Z" fill="#000"/><path d="M3.5 4.5H13.5M3.5 7.5H13.5M3.5 10.5H11" stroke="#d5dde9" stroke-width="1"/><circle cx="16.4" cy="16.2" r="7.6" fill="#d6d6d6" stroke="#9a9a9a" stroke-width="0.8"/><text x="16.4" y="20.5" font-size="12" text-anchor="middle" fill="#111" font-family="Liberation Sans">2</text></svg>
<div class="a" style="left:1915px;top:1040px;width:1px;height:40px;background:#9fb0bc"></div>

</body></html>
